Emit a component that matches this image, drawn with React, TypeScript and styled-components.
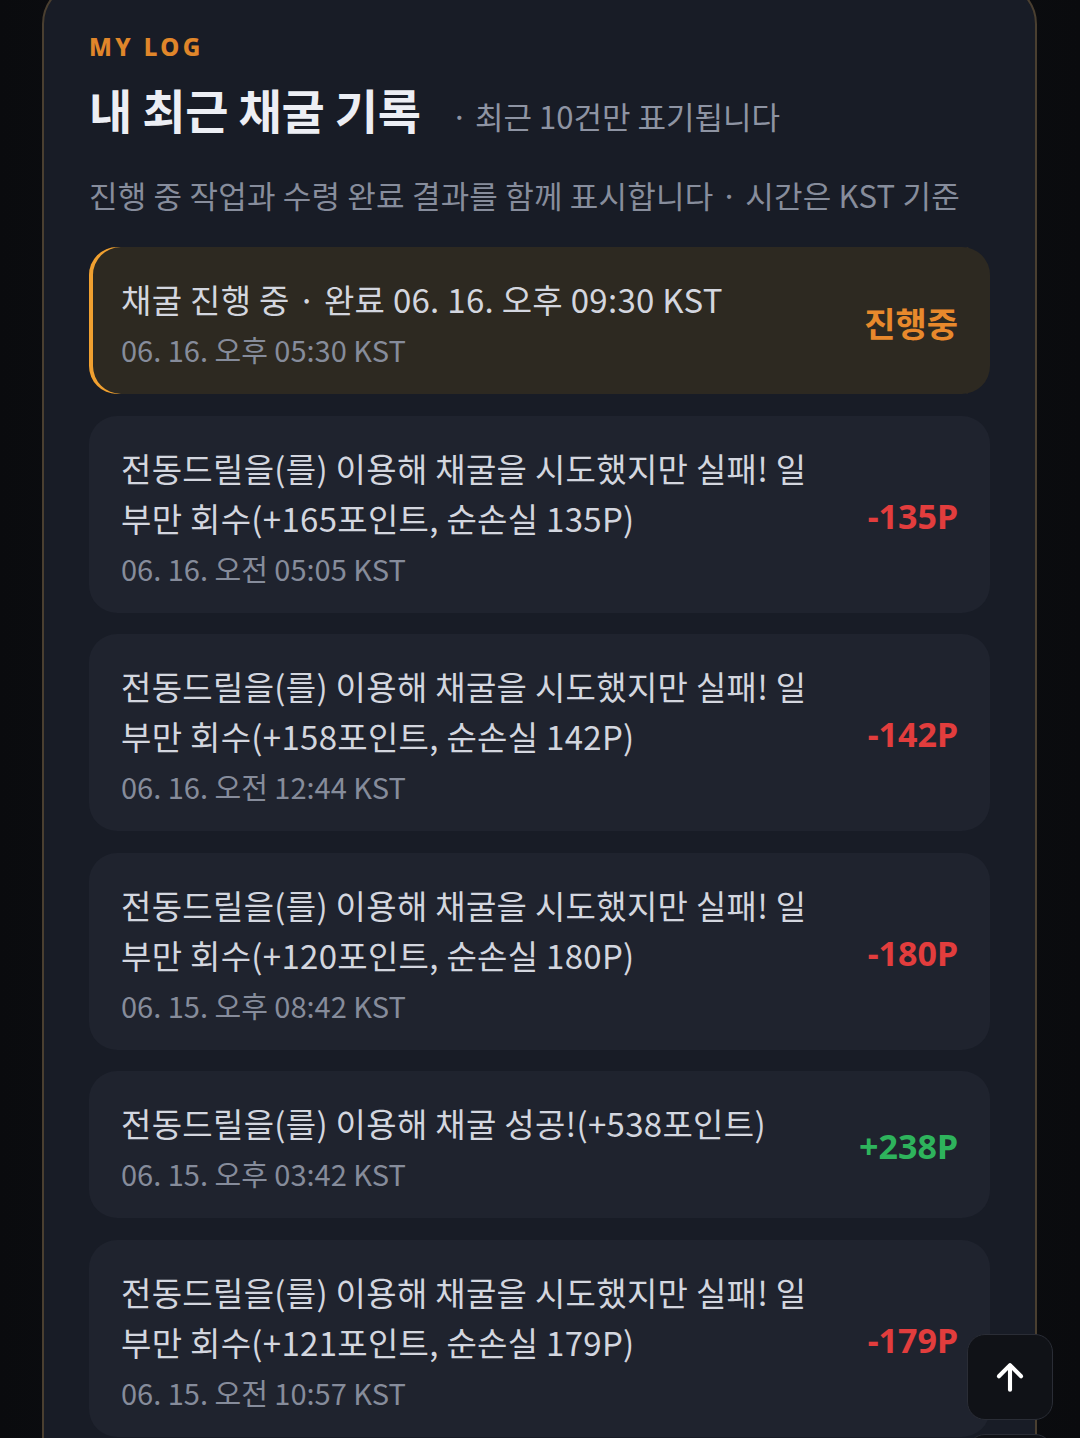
import React from 'react';
import styled, { createGlobalStyle } from 'styled-components';

const GlobalStyle = createGlobalStyle`
    html, body {
        margin: 0;
        padding: 0;
        background: #0d0e12;
        font-family: "Noto Sans CJK KR", "Noto Sans", sans-serif;
    }
`;

type Status = 'pending' | 'loss' | 'gain';

type LogItem = {
    id: number;
    title: string;
    time: string;
    amount: string;
    status: Status;
};

const logs: LogItem[] = [
    { id: 1, title: '채굴 진행 중 · 완료 06. 16. 오후 09:30 KST', time: '06. 16. 오후 05:30 KST', amount: '진행중', status: 'pending' },
    { id: 2, title: '전동드릴을(를) 이용해 채굴을 시도했지만 실패! 일부만 회수(+165포인트, 순손실 135P)', time: '06. 16. 오전 05:05 KST', amount: '-135P', status: 'loss' },
    { id: 3, title: '전동드릴을(를) 이용해 채굴을 시도했지만 실패! 일부만 회수(+158포인트, 순손실 142P)', time: '06. 16. 오전 12:44 KST', amount: '-142P', status: 'loss' },
    { id: 4, title: '전동드릴을(를) 이용해 채굴을 시도했지만 실패! 일부만 회수(+120포인트, 순손실 180P)', time: '06. 15. 오후 08:42 KST', amount: '-180P', status: 'loss' },
    { id: 5, title: '전동드릴을(를) 이용해 채굴 성공!(+538포인트)', time: '06. 15. 오후 03:42 KST', amount: '+238P', status: 'gain' },
    { id: 6, title: '전동드릴을(를) 이용해 채굴을 시도했지만 실패! 일부만 회수(+121포인트, 순손실 179P)', time: '06. 15. 오전 10:57 KST', amount: '-179P', status: 'loss' },
];

const amountColor: Record<Status, string> = {
    pending: '#e8892c',
    loss: '#e23d3d',
    gain: '#2eb35c',
};

const App: React.FC = () => {
    return (
        <>
            <GlobalStyle />
            <Page>
                <Card>
                    <Eyebrow>MY LOG</Eyebrow>
                    <TitleRow>
                        <Title>내 최근 채굴 기록</Title>
                        <TitleNote>· 최근 10건만 표기됩니다</TitleNote>
                    </TitleRow>
                    <Description>진행 중 작업과 수령 완료 결과를 함께 표시합니다 · 시간은 KST 기준</Description>
                    <List>
                        {logs.map(log => (
                            <Row key={log.id} $active={log.status === 'pending'}>
                                <RowText>
                                    <RowTitle>{log.title}</RowTitle>
                                    <RowTime>{log.time}</RowTime>
                                </RowText>
                                <Amount $status={log.status}>{log.amount}</Amount>
                            </Row>
                        ))}
                    </List>
                </Card>
            </Page>
            <FloatingStack>
                <FloatButton aria-label="맨 위로">
                    <svg width="38" height="38" viewBox="0 0 24 24" fill="none" stroke="#fff" strokeWidth="2.6" strokeLinecap="round" strokeLinejoin="round">
                        <path d="M12 20V5" />
                        <path d="M5 11.5L12 4.5L19 11.5" />
                    </svg>
                </FloatButton>
                <FloatButton aria-label="메뉴" />
            </FloatingStack>
        </>
    );
};

export default App;

const Page = styled.div`
    min-height: 1438px;
    overflow: hidden;
    background: linear-gradient(90deg, #0a0b0e 0%, #111319 50%, #0a0b0e 100%);
    padding: 0 43px 0 42px;
`;

const Card = styled.section`
    margin-top: -18px;
    padding: 47px 45px 60px 45px;
    background: #181c26;
    border: 2px solid #4a3f30;
    border-radius: 42px;
    box-sizing: border-box;
`;

const Eyebrow = styled.div`
    font-family: "Noto Sans", "Noto Sans CJK KR", sans-serif;
    font-size: 24px;
    font-weight: 800;
    letter-spacing: 3.4px;
    color: #e0862a;
    line-height: 32px;
`;

const TitleRow = styled.div`
    display: flex;
    align-items: baseline;
    gap: 30px;
    margin-top: 16px;
`;

const Title = styled.h1`
    margin: 0;
    font-size: 47px;
    font-weight: 700;
    color: #eceef4;
    line-height: 60px;
    letter-spacing: -0.3px;
`;

const TitleNote = styled.span`
    font-size: 31px;
    color: #8e94a3;
`;

const Description = styled.p`
    margin: 34px 0 0 0;
    font-size: 31px;
    line-height: 44px;
    letter-spacing: 0.2px;
    color: #878d9c;
`;

const List = styled.div`
    display: flex;
    flex-direction: column;
    gap: 21.5px;
    margin-top: 30px;
`;

const Row = styled.div<{ $active: boolean }>`
    display: flex;
    align-items: center;
    gap: 40px;
    padding: 27px 32px 24px 32px;
    border-radius: 28px;
    background: ${({ $active }) => ($active ? '#2d2921' : '#1f232e')};
    box-shadow: ${({ $active }) => ($active ? 'inset 4px 0 0 #f0a030' : 'none')};
`;

const RowText = styled.div`
    flex: 1;
    min-width: 0;
`;

const RowTitle = styled.div`
    font-size: 33px;
    line-height: 50px;
    letter-spacing: 0.3px;
    color: #d3d6df;
`;

const RowTime = styled.div`
    font-size: 29px;
    line-height: 42px;
    color: #868c9b;
    margin-top: 4px;
`;

const Amount = styled.div<{ $status: Status }>`
    margin-left: auto;
    font-family: "Noto Sans", "Noto Sans CJK KR", sans-serif;
    font-size: 34px;
    font-weight: 700;
    white-space: nowrap;
    color: ${({ $status }) => amountColor[$status]};
`;

const FloatingStack = styled.div`
    position: fixed;
    right: 27px;
    top: 1334px;
    display: flex;
    flex-direction: column;
    gap: 14px;
`;

const FloatButton = styled.button`
    width: 86px;
    height: 86px;
    display: flex;
    align-items: center;
    justify-content: center;
    background: #101217;
    border: 1.5px solid #2a2d36;
    border-radius: 18px;
    cursor: pointer;
`;
